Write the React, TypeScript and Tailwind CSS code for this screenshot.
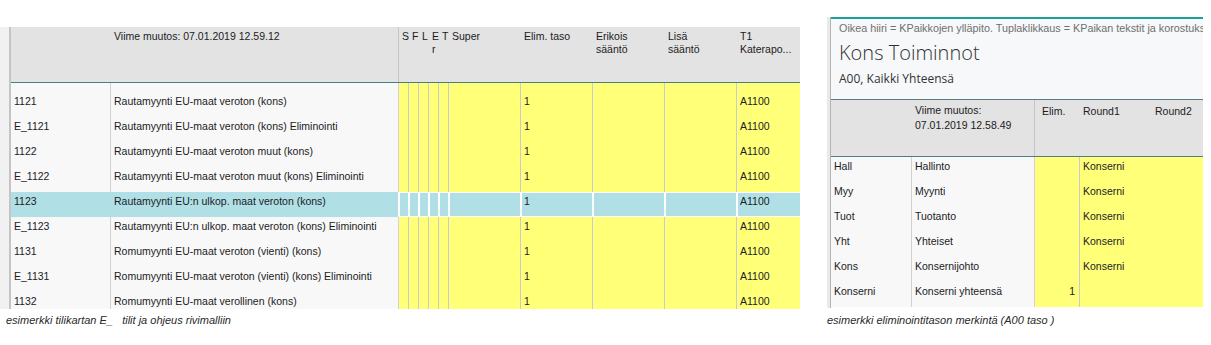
import React from "react";

const tbl = { fontFamily: "'Liberation Sans', Arial, sans-serif" } as const;
const ui = { fontFamily: "'Open Sans', 'Noto Sans', sans-serif" } as const;

type Row = { code: string; name: string; hl?: boolean };

const leftRows: Row[] = [
  { code: "1121", name: "Rautamyynti EU-maat veroton (kons)" },
  { code: "E_1121", name: "Rautamyynti EU-maat veroton (kons) Eliminointi" },
  { code: "1122", name: "Rautamyynti EU-maat veroton muut (kons)" },
  { code: "E_1122", name: "Rautamyynti EU-maat veroton muut (kons) Eliminointi" },
  { code: "1123", name: "Rautamyynti EU:n ulkop. maat veroton (kons)", hl: true },
  { code: "E_1123", name: "Rautamyynti EU:n ulkop. maat veroton (kons) Eliminointi" },
  { code: "1131", name: "Romumyynti EU-maat veroton (vienti) (kons)" },
  { code: "E_1131", name: "Romumyynti EU-maat veroton (vienti) (kons) Eliminointi" },
  { code: "1132", name: "Romumyynti EU-maat verollinen (kons)" },
];

const yellowWidths = [
  "w-[10px]",
  "w-[10px]",
  "w-[10px]",
  "w-[10px]",
  "w-[10px]",
  "w-[72px]",
  "w-[72px]",
  "w-[72px]",
  "w-[72px]",
];

function YCell({ w, hl, text }: { w: string; hl?: boolean; text?: string }) {
  if (hl) {
    return (
      <div className={`${w} shrink-0 h-full border-r border-white bg-white pl-px py-px overflow-hidden`}>
        <div className="h-full bg-[#b0e0e6] pl-[2px] pt-[2px] whitespace-nowrap">{text}</div>
      </div>
    );
  }
  return (
    <div className={`${w} shrink-0 h-full border-r border-[#cacad2] bg-[#ffff78] pl-[3px] pt-[3px] whitespace-nowrap overflow-hidden`}>
      {text}
    </div>
  );
}

function LeftRow({ row, h }: { row?: Row; h: string }) {
  const hl = row?.hl;
  return (
    <div className={`flex ${h} shrink-0`}>
      <div
        className={`w-[100px] shrink-0 border-r ${hl ? "border-[#b0e0e6] bg-[#b0e0e6]" : "border-[#d2d2d2] bg-[#f8f8f8]"} pl-[3px] pt-[3px] whitespace-nowrap overflow-hidden`}
      >
        {row?.code}
      </div>
      <div
        className={`w-[288px] shrink-0 border-r ${hl ? "border-white bg-[#b0e0e6]" : "border-[#d2d2d2] bg-[#f8f8f8]"} pl-[3px] pt-[3px] whitespace-nowrap overflow-hidden`}
      >
        {row?.name}
      </div>
      {yellowWidths.map((w, i) => (
        <YCell key={i} w={w} hl={hl} text={row && i === 6 ? "1" : undefined} />
      ))}
      {hl ? (
        <div className="flex-1 h-full bg-white pl-px py-px overflow-hidden">
          <div className="h-full bg-[#b0e0e6] pl-[2px] pt-[2px]">{row ? "A1100" : ""}</div>
        </div>
      ) : (
        <div className="flex-1 h-full bg-[#ffff78] pl-[3px] pt-[3px] overflow-hidden">{row ? "A1100" : ""}</div>
      )}
    </div>
  );
}

function LeftPanel() {
  const hdrCols: { w: string; lines: string[] }[] = [
    { w: "w-[10px]", lines: ["S"] },
    { w: "w-[10px]", lines: ["F"] },
    { w: "w-[10px]", lines: ["L"] },
    { w: "w-[10px]", lines: ["E", "r"] },
    { w: "w-[10px]", lines: ["T"] },
    { w: "w-[72px]", lines: ["Super"] },
    { w: "w-[72px]", lines: ["Elim. taso"] },
    { w: "w-[72px]", lines: ["Erikois", "sääntö"] },
    { w: "w-[72px]", lines: ["Lisä", "sääntö"] },
  ];
  return (
    <div className="w-[800px] shrink-0">
      <div className="mt-[27px] flex h-[282px]">
        <div className="w-[9px] shrink-0 bg-[#f1f1f1]" />
        <div className="w-[2px] shrink-0 bg-[#c4c4c4]" />
        <div className="flex-1 flex flex-col overflow-hidden text-[10.5px] leading-[13px] text-[#1b1b24]" style={tbl}>
          <div className="flex h-[56px] shrink-0 bg-[#e3e3e3] border-b border-[#3f8189]">
            <div className="w-[388px] shrink-0 border-r border-[#c6c6c6] pl-[103px] pt-[3px] whitespace-nowrap">
              Viime muutos: 07.01.2019 12.59.12
            </div>
            {hdrCols.map((c, i) => (
              <div key={i} className={`${c.w} shrink-0 pl-[3px] pt-[3px] overflow-hidden whitespace-nowrap`}>
                {c.lines.map((l, j) => (
                  <div key={j}>{l}</div>
                ))}
              </div>
            ))}
            <div className="flex-1 pl-[3px] pt-[3px] overflow-hidden whitespace-nowrap">
              <div>T1</div>
              <div>Katerapo...</div>
            </div>
          </div>
          <div className="flex-1 flex flex-col overflow-hidden">
            <LeftRow h="h-[9px]" />
            {leftRows.map((r, i) => (
              <LeftRow key={i} row={r} h="h-[25px]" />
            ))}
          </div>
        </div>
      </div>
      <div className="mt-[4px] pl-[6px] text-[11px] leading-[14px] italic text-[#2a2a2a] whitespace-pre" style={tbl}>
        {"esimerkki tilikartan E_   tilit ja ohjeus rivimalliin"}
      </div>
    </div>
  );
}

const rightRows = [
  { code: "Hall", name: "Hallinto", elim: "", r1: "Konserni" },
  { code: "Myy", name: "Myynti", elim: "", r1: "Konserni" },
  { code: "Tuot", name: "Tuotanto", elim: "", r1: "Konserni" },
  { code: "Yht", name: "Yhteiset", elim: "", r1: "Konserni" },
  { code: "Kons", name: "Konsernijohto", elim: "", r1: "Konserni" },
  { code: "Konserni", name: "Konserni yhteensä", elim: "1", r1: "" },
];

function RightPanel() {
  return (
    <div className="w-[383px] shrink-0 ml-[20px]">
      <div className="mt-[17px] flex h-[291px] pl-[7px]">
        <div className="w-[3px] shrink-0 bg-[#e9e9e9]" />
        <div className="w-px shrink-0 bg-[#b4b4b4]" />
        <div className="flex-1 flex flex-col overflow-hidden">
          <div className="h-[2px] shrink-0 bg-[#1aa096]" />
          <div className="h-[81px] shrink-0 bg-[#f7f8fa] pl-[8px] border-b border-[#587d83] overflow-hidden">
            <div className="pt-[2px] text-[10.8px] leading-[14px] text-[#6f6f6f] whitespace-nowrap" style={tbl}>
              Oikea hiiri = KPaikkojen ylläpito. Tuplaklikkaus = KPaikan tekstit ja korostukset
            </div>
            <div className="mt-[5px] text-[20px] leading-[26px] font-light text-[#333]" style={ui}>
              Kons Toiminnot
            </div>
            <div className="mt-[5px] text-[12px] leading-[16px] text-[#333]" style={ui}>
              A00, Kaikki Yhteensä
            </div>
          </div>
          <div className="text-[10.5px] leading-[13px] text-[#1b1b24]" style={tbl}>
            <div className="flex h-[57px] bg-[#e3e3e3] border-b border-[#4f7d83]">
              <div className="w-[204px] shrink-0 border-r border-[#c6c6c6] pl-[84px] pt-[3px] leading-[15px] whitespace-nowrap">
                <div>Viime muutos:</div>
                <div>07.01.2019 12.58.49</div>
              </div>
              <div className="w-[45px] shrink-0 pl-[7px] pt-[5px]">Elim.</div>
              <div className="w-[72px] shrink-0 pl-[3px] pt-[5px]">Round1</div>
              <div className="flex-1 pl-[3px] pt-[5px] whitespace-nowrap">Round2</div>
            </div>
            {rightRows.map((r, i) => (
              <div key={i} className="flex h-[25px]">
                <div className="w-[81px] shrink-0 border-r border-[#d2d2d2] bg-[#f8f8f8] pl-[3px] pt-[3px]">{r.code}</div>
                <div className="w-[123px] shrink-0 border-r border-[#d2d2d2] bg-[#f8f8f8] pl-[3px] pt-[3px] whitespace-nowrap">
                  {r.name}
                </div>
                <div className="w-[45px] shrink-0 border-r border-[#cacad2] bg-[#ffff78] pr-[4px] pt-[3px] text-right">
                  {r.elim}
                </div>
                <div className="flex-1 bg-[#ffff78] pl-[3px] pt-[3px]">{r.r1}</div>
              </div>
            ))}
          </div>
        </div>
      </div>
      <div className="mt-[5px] pl-[7px] text-[11px] leading-[14px] italic text-[#2a2a2a] whitespace-nowrap" style={tbl}>
        esimerkki eliminointitason merkintä (A00 taso )
      </div>
    </div>
  );
}

export default function App() {
  return (
    <div className="w-[1211px] h-[345px] bg-white flex overflow-hidden">
      <LeftPanel />
      <RightPanel />
    </div>
  );
}
